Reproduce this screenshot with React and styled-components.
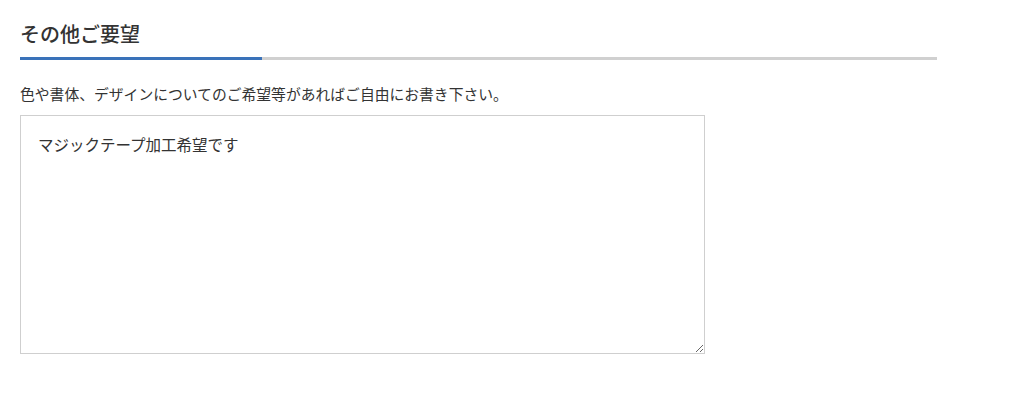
import React from "react";
import styled, { createGlobalStyle } from "styled-components";

const GlobalStyle = createGlobalStyle`
  html, body { margin: 0; padding: 0; background: #fff; }
  body { font-family: "Noto Sans CJK JP", "Noto Sans", sans-serif; color: #333; }
`;

const Section = styled.section`
  width: 917px;
  padding: 20px 0 0 20px;
`;

const Heading = styled.h2`
  margin: 0;
  font-size: 20px;
  font-weight: 500;
  line-height: 28px;
  color: #333;
  padding-bottom: 9px;
  border-bottom: 3px solid #d0d0d0;
  position: relative;
  &::after {
    content: "";
    position: absolute;
    left: 0;
    bottom: -3px;
    width: 242px;
    height: 3px;
    background: #3a72b9;
  }
`;

const Lead = styled.p`
  margin: 22px 0 0;
  font-size: 14.8px;
  line-height: 24px;
  color: #333;
`;

const TextArea = styled.textarea`
  display: block;
  box-sizing: border-box;
  margin-top: 9px;
  width: 685px;
  height: 239px;
  border: 1px solid #cfcfcf;
  padding: 15px 17px;
  font-family: inherit;
  font-size: 15.5px;
  line-height: 26px;
  color: #333;
  outline: none;
  resize: both;
`;

export default function App() {
  return (
    <>
      <GlobalStyle />
      <Section>
        <Heading>その他ご要望</Heading>
        <Lead>色や書体、デザインについてのご希望等があればご自由にお書き下さい。</Lead>
        <TextArea defaultValue="マジックテープ加工希望です" />
      </Section>
    </>
  );
}
